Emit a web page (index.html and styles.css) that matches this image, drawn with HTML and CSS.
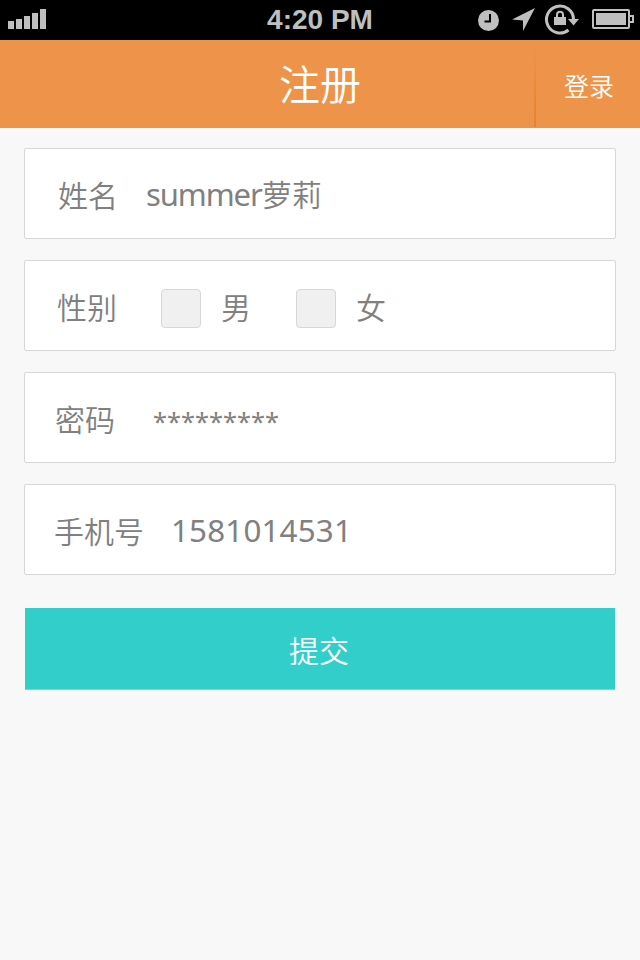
FILE: index.html
```html
<!DOCTYPE html>
<html lang="zh-CN">
<head>
<meta charset="utf-8">
<title>注册</title>
<link rel="stylesheet" href="styles.css">
</head>
<body>
<div class="status">
  <svg class="signal" width="38" height="20" viewBox="0 0 38 20" fill="#bfbfbf"><path d="M0 12h6v8H0zM8 10h6v10H8zM16 7h6v13h-6zM24 4h6v16h-6zM32 0h6v20h-6z"/></svg>
  <span class="time">4:20 PM</span>
  <svg class="indicators" width="160" height="40" viewBox="0 0 160 40">
    <circle cx="8.500" cy="20.500" r="10.500" fill="#bfbfbf"/>
    <path d="M10 14v7.500H4.500" fill="none" stroke="#000" stroke-width="2"/>
    <path d="M55 8L32 19.500l11 1V31z" fill="#bfbfbf"/>
    <path d="M93.500 19A13.500 13.500 0 1 0 88.500 30" fill="none" stroke="#bfbfbf" stroke-width="3"/>
    <path d="M88 19h11l-5.500 6.500z" fill="#bfbfbf"/>
    <path d="M74 17h12v8H74z" fill="#bfbfbf"/>
    <path d="M77 17v-2.300a3 3 0 0 1 6 0V17" fill="none" stroke="#bfbfbf" stroke-width="2"/>
    <rect x="113" y="10" width="36" height="18" rx="1" fill="none" stroke="#bfbfbf" stroke-width="2"/>
    <path d="M116 13h30v12h-30z" fill="#bfbfbf"/>
    <path d="M150 16h3v6h-3" fill="none" stroke="#bfbfbf" stroke-width="2"/>
  </svg>
</div>
<header class="header">
  <h1 class="title">注册</h1>
  <a class="login">登录</a>
</header>
<main class="form">
  <div class="field name"><span class="label">姓名</span><span class="value"><span class="latin">summer</span>萝莉</span></div>
  <div class="field gender"><span class="label">性别</span><span class="box"></span><span class="option">男</span><span class="box"></span><span class="option">女</span></div>
  <div class="field password"><span class="label">密码</span><span class="stars">*********</span></div>
  <div class="field phone"><span class="label">手机号</span><span class="digits">1581014531</span></div>
  <div class="submit">提交</div>
</main>
</body>
</html>
```
FILE: styles.css
```css
* { box-sizing: border-box; }
body {
  margin: 0;
  height: 960px;
  overflow: hidden;
  background: #f8f8f8;
  color: #808080;
  font: 350 30px/44px "Noto Sans CJK SC", sans-serif;
}
.status {
  display: grid;
  grid-template-columns: 160px 1fr 160px;
  height: 40px;
  background: #000;
}
.signal { margin: 9px 0 0 8px; }
.indicators { overflow: visible; }
.time {
  color: #bfbfbf;
  font: bold 28px/39px "Liberation Sans", sans-serif;
  text-align: center;
}
.header {
  display: grid;
  grid-template-columns: 106px 1fr 106px;
  height: 88px;
  background: #ee944a;
  color: #fff;
}
.title {
  grid-column: 2;
  margin: 0;
  font-size: 41px;
  font-weight: 350;
  line-height: 84px;
  text-align: center;
}
.login {
  height: 87px;
  padding-left: 28px;
  border-left: 2px solid;
  border-image: linear-gradient(#ee944a, #e5832f) 1;
  font-size: 25px;
  line-height: 90px;
}
.form {
  display: flex;
  flex-direction: column;
  gap: 21px;
  padding: 20px 24px;
}
.field {
  display: flex;
  align-items: center;
  height: 91px;
  padding-left: 32px;
  border: 1px solid #d7d7d7;
  border-radius: 2px;
  background: #fff;
  white-space: nowrap;
}
.name { padding-left: 33px; }
.name .value { margin-left: 28px; }
.latin {
  font: 31px/44px "Noto Sans", sans-serif;
  letter-spacing: -1.1px;
}
.box {
  width: 40px;
  height: 39px;
  margin: 5px 20px 0 44px;
  border: 1px solid #d7d7d7;
  border-radius: 4px;
  background: #f0f0f0;
}
.option + .box { margin-left: 45px; }
.password { padding-left: 30px; }
.phone { padding-left: 29px; }
.stars {
  margin: 7px 0 0 38px;
  font: 25.400px/34px "Noto Sans", sans-serif;
}
.digits {
  margin-left: 27px;
  font: 31.300px/44px "Noto Sans", sans-serif;
  letter-spacing: 0.200px;
}
.submit {
  height: 82px;
  margin: 12px 1px 0;
  padding-right: 2px;
  border-bottom: 1px solid #70dcd8;
  background: #31ceca;
  color: #fff;
  line-height: 83px;
  text-align: center;
}
```
